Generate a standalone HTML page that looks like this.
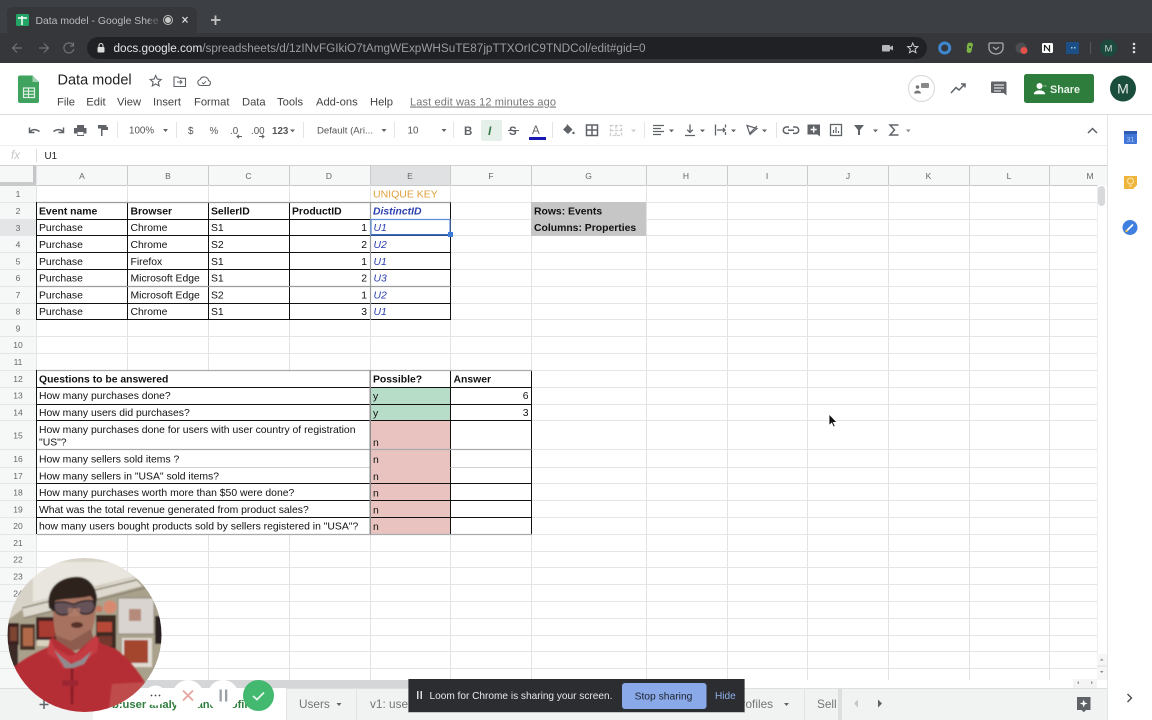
<!DOCTYPE html>
<html><head><meta charset="utf-8"><title>Data model</title>
<style>
html,body{margin:0;padding:0;background:#fff;width:1152px;height:720px;overflow:hidden}
svg{display:block;filter:blur(.25px)}
text{font-family:"Liberation Sans",Arial,sans-serif}
.c{font-size:10.4px;fill:#111}
.b{font-weight:bold}
.h{font-size:8.5px;fill:#666;text-anchor:middle}
.r{font-size:8.5px;fill:#666;text-anchor:middle}
.m{font-size:11.2px;fill:#444}
.t{font-size:9.8px;fill:#555}
.u{font-size:10.4px;fill:#2a3fb0;font-style:italic}
.ic{fill:#5f6368}
.st{fill:none;stroke:#5f6368;stroke-width:1.4}
.tab{font-size:11.8px;fill:#757575}
</style></head><body>
<svg width="1152" height="720" viewBox="0 0 1152 720" xmlns="http://www.w3.org/2000/svg">
<!-- chrome -->
<rect width="1152" height="34" fill="#3c3f43"/>
<rect y="33" width="1152" height="30" fill="#35373b"/>
<path d="M7 33V13a6 6 0 0 1 6-6H191a6 6 0 0 1 6 6V33z" fill="#35373b"/>
<rect x="16" y="14" width="13" height="12" rx="1.500" fill="#23a566"/>
<path d="M18 18h9M22 16v9" stroke="#fff" stroke-width="1.500"/>
<text x="35.500" y="24" font-size="10.400" fill="#b9bbbe">Data model - Google Shee</text>
<rect x="150" y="12" width="12" height="16" fill="#35373b" opacity=".6"/>
<circle cx="168" cy="20" r="4.500" fill="none" stroke="#bbb" stroke-width="1"/><circle cx="168" cy="20" r="3" fill="#c8c8c8"/>
<path d="M182.500 17l5 5.500m0-5.500l-5 5.500" stroke="#ddd" stroke-width="1.300"/>
<path d="M215.500 15.500v9.500M211 20h9.500" stroke="#c5c5c5" stroke-width="1.800"/>
<path d="M22 48H13m4-4.500L12.500 48l4.500 4.500" fill="none" stroke="#6f7276" stroke-width="1.200"/>
<path d="M39 48h9m-4-4.500l4.500 4.500-4.500 4.500" fill="none" stroke="#6f7276" stroke-width="1.200"/>
<path d="M73 45a5 5 0 1 0 .8 4M73.500 42.500v3.500H70" fill="none" stroke="#6f7276" stroke-width="1.200"/>
<rect x="87" y="37" width="840" height="22" rx="11" fill="#202124"/>
<rect x="97.500" y="47" width="7" height="5.500" rx="1" fill="#ddd"/><path d="M99 47v-1.500a2 2 0 0 1 4 0V47" fill="none" stroke="#ddd"/>
<text x="113.500" y="52" font-size="11.750" fill="#e4e5e6" textLength="532">docs.google.com<tspan fill="#9a9da1">/spreadsheets/d/1zINvFGIkiO7tAmgWExpWHSuTE87jpTTXOrIC9TNDCol/edit#gid=0</tspan></text>
<rect x="882" y="45" width="8" height="6.500" rx="1" fill="#b5b7ba"/><path d="M890 47l3-1.500v5l-3-1.500z" fill="#b5b7ba"/>
<path d="M912.700 43l1.500 3.400 3.700.3-2.800 2.400.9 3.600-3.300-1.900-3.200 1.900.9-3.600-2.800-2.400 3.700-.3z" fill="none" stroke="#ccc" stroke-width="1"/>
<circle cx="944.700" cy="48" r="5" fill="none" stroke="#3f87cf" stroke-width="3"/>
<path d="M968 43c3-1 5 0 5 2 0 1-1 2-1 3 0 3-1 5-3 5-2 0-3-2-2-4 0-1-1-2 1-6z" fill="#7cb342"/><circle cx="970" cy="47" r="1" fill="#35373b"/>
<path d="M990 43h12a1 1 0 0 1 1 1v4a7 6 0 0 1-14 0v-4a1 1 0 0 1 1-1z" fill="none" stroke="#aaa" stroke-width="1.300"/><path d="M993 47l3 2.500 3-2.500" fill="none" stroke="#aaa" stroke-width="1.200"/>
<circle cx="1021" cy="48" r="5.500" fill="#4b4d50"/><circle cx="1024" cy="50.500" r="3.500" fill="#e2514a"/>
<rect x="1042" y="43" width="11" height="10" rx="1.500" fill="#fff"/><path d="M1044.500 45v6m0-6l5 6v-6" stroke="#222" stroke-width="1.200" fill="none"/>
<rect x="1066" y="42" width="13" height="12" fill="#1d4f87"/><rect x="1071" y="47" width="1.500" height="1.500" fill="#9cd"/><rect x="1074" y="47" width="1.500" height="1.500" fill="#9cd"/>
<rect x="1090" y="42" width="1" height="12" fill="#55585c"/>
<circle cx="1108.500" cy="48" r="8.500" fill="#1c4a3c"/><text x="1108.500" y="51.500" font-size="9.500" fill="#c9d4d0" text-anchor="middle">M</text>
<circle cx="1134" cy="44" r="1.300" fill="#ddd"/><circle cx="1134" cy="48" r="1.300" fill="#ddd"/><circle cx="1134" cy="52" r="1.300" fill="#ddd"/>

<!-- docs header -->
<path d="M18 77.500a2 2 0 0 1 2-2h12.500l6.500 6.500v19a2 2 0 0 1-2 2H20a2 2 0 0 1-2-2z" fill="#3fa35f"/>
<path d="M32.500 75.500l6.500 6.500h-6.500z" fill="#9fd1af"/>
<path d="M23.500 88h11v9.500h-11zM23.500 91.200h11M23.500 94.300h11M28.500 88v9.500" fill="none" stroke="#dcefe2" stroke-width="1.200"/>
<text x="57.500" y="84.500" font-size="14.500" fill="#222">Data model</text>
<path d="M155.700 75.500l1.600 3.600 3.900.4-2.900 2.600.8 3.800-3.400-2-3.400 2 .8-3.800-2.900-2.600 3.900-.4z" fill="none" stroke="#5f6368" stroke-width="1.100"/>
<path d="M174 77h4l1.200 1.300h6.300v8.200H174z" fill="none" stroke="#5f6368" stroke-width="1.100"/><path d="M177 82h5m-2-2l2 2-2 2" fill="none" stroke="#5f6368"/>
<path d="M200.500 85.500a3 3 0 0 1-.4-5.900 4.500 4.500 0 0 1 8.500 1 2.500 2.500 0 0 1-.4 4.900z" fill="none" stroke="#5f6368" stroke-width="1.100"/><path d="M202 82.500l1.500 1.300 2.500-2.500" fill="none" stroke="#5f6368"/>
<text x="57" y="105.500" class="m">File</text>
<text x="86.300" y="105.500" class="m">Edit</text>
<text x="117" y="105.500" class="m">View</text>
<text x="153" y="105.500" class="m">Insert</text>
<text x="194" y="105.500" class="m">Format</text>
<text x="242" y="105.500" class="m">Data</text>
<text x="277" y="105.500" class="m">Tools</text>
<text x="316" y="105.500" class="m">Add-ons</text>
<text x="370" y="105.500" class="m">Help</text>
<text x="410" y="105.500" font-size="11" fill="#777" text-decoration="underline" textLength="146">Last edit was 12 minutes ago</text>

<circle cx="921.500" cy="88.500" r="13" fill="#fff" stroke="#dadce0" stroke-width="1.200"/>
<circle cx="917.500" cy="87" r="1.800" fill="#777"/><path d="M914 93.500a3.500 3 0 0 1 7 0z" fill="#777"/><rect x="921" y="83" width="8" height="5" rx="1" fill="#888"/>
<path d="M951 93l5-5.500 3 2.500 6-6M961 84h4v3.500" fill="none" stroke="#5f6368" stroke-width="1.500"/>
<path d="M992 81.500h13.500a1 1 0 0 1 1 1v13l-3-2.500H992a1 1 0 0 1-1-1v-9.500a1 1 0 0 1 1-1z" fill="#5f6368"/><path d="M994 85h10M994 88h10M994 91h7" stroke="#fff"/>
<rect x="1024" y="74" width="70" height="29" rx="2.500" fill="#2f7d3c"/>
<circle cx="1039.500" cy="86" r="3" fill="#fff"/><path d="M1034 94a5.500 3.500 0 0 1 11 0zM1043.500 86h3" fill="#fff" stroke="#fff" stroke-width=".5"/>
<text x="1050" y="93" font-size="10.800" font-weight="bold" fill="#e8f2ea">Share</text>
<circle cx="1123" cy="88.500" r="13" fill="#1a4d3c"/><text x="1123" y="93.500" font-size="14" fill="#e6eeea" text-anchor="middle">M</text>

<!-- toolbar -->
<rect y="114" width="1107" height="1" fill="#dadce0"/>
<rect x="1107" y="114" width="45" height="1" fill="#dadce0"/>
<path d="M30 132.500c1-3 5-4 9.500-1M29.500 127.500v5h5" fill="none" stroke="#5f6368" stroke-width="1.500"/>
<path d="M63 132.500c-1-3-5-4-9.500-1M63.500 127.500v5h-5" fill="none" stroke="#5f6368" stroke-width="1.500"/>
<path d="M74 128h3v-3h7v3h2.500v5.500h-2.500v2.500h-7v-2.500h-3z" fill="#5f6368"/><rect x="77.500" y="132" width="6" height="3" fill="#fff"/>
<path d="M98 125h8.500v3.500H98zM106.500 127h1.500v3h-5.500v6H101v-7.500" fill="#5f6368"/>
<rect x="117" y="122" width="1" height="16" fill="#e4e4e4"/>
<text x="129" y="133.500" class="t">100%</text><path d="M163 129h5l-2.500 3z" class="ic"/>
<rect x="176" y="122" width="1" height="16" fill="#e4e4e4"/>
<text x="188" y="134" class="t" font-size="10.500">$</text>
<text x="209.500" y="134" class="t" font-size="10">%</text>
<text x="230" y="134" class="t" font-size="10">.0</text><path d="M242 136.500h-5m2-1.800l-2 1.800 2 1.800" fill="none" stroke="#5f6368"/>
<text x="251" y="134" class="t" font-size="10">.00</text><path d="M259 136.500h5m-2-1.800l2 1.800-2 1.800" fill="none" stroke="#5f6368"/>
<text x="272" y="134" class="t" font-size="10" font-weight="bold">123</text><path d="M290 129.500h5l-2.500 2.800z" class="ic"/>
<rect x="303" y="122" width="1" height="16" fill="#e4e4e4"/>
<text x="317" y="133.500" font-size="9.600" fill="#555">Default (Ari...</text><path d="M381.500 129h5l-2.500 3z" class="ic"/>
<rect x="394" y="122" width="1" height="16" fill="#e4e4e4"/>
<text x="407.500" y="133.500" class="t">10</text><path d="M441.500 129h5l-2.500 3z" class="ic"/>
<rect x="453" y="122" width="1" height="16" fill="#e4e4e4"/>
<text x="464" y="135" font-size="11.500" font-weight="bold" fill="#5f6368">B</text>
<rect x="481" y="120" width="21" height="21" rx="2" fill="#e6f0ea"/>
<text x="488" y="135" font-size="12" font-weight="bold" font-style="italic" fill="#3b7d4a" font-family="Liberation Serif">I</text>
<text x="509" y="135" font-size="11.500" font-weight="bold" fill="#5f6368">S</text><rect x="508" y="130" width="11" height="1" fill="#5f6368"/>
<text x="532" y="134" font-size="11.500" fill="#5f6368">A</text><rect x="529" y="137" width="17" height="3" fill="#1919b4"/>
<rect x="552" y="122" width="1" height="16" fill="#e4e4e4"/>
<path d="M567 124l5.500 5.500-4.500 4.500-5-4.500 3.500-3.500z" fill="#5f6368"/><circle cx="573.500" cy="133" r="1.200" fill="#5f6368"/>
<path d="M586.500 125h11v10.500h-11zM592 125v10.500M586.500 130h11" fill="none" stroke="#5f6368" stroke-width="1.500"/>
<path d="M610.500 125.500h11v10h-11zM616 125.500v3M616 132.500v3M610.500 130.500h11" fill="none" stroke="#c9cbce" stroke-width="1.300" stroke-dasharray="3 1.500"/>
<path d="M631 129.500h5l-2.500 2.800z" fill="#c9cbce"/>
<rect x="644" y="122" width="1" height="16" fill="#e4e4e4"/>
<path d="M653 125.500h11M653 128.500h8M653 131.500h11M653 134.500h8" stroke="#5f6368" stroke-width="1.200"/>
<path d="M669 129.500h5l-2.500 2.800z" class="ic"/>
<path d="M690 124.500v8m-2.800-2.800l2.800 2.800 2.800-2.800M685 135.500h10" fill="none" stroke="#5f6368" stroke-width="1.300"/>
<path d="M700 129.500h5l-2.500 2.800z" class="ic"/>
<path d="M715.500 124.500v11M725.500 124.500v3M725.500 132v3M717 130h8m-2-2l2 2-2 2" fill="none" stroke="#5f6368" stroke-width="1.300"/>
<path d="M731 129.500h5l-2.500 2.800z" class="ic"/>
<path d="M747 125.500l10 3-7 6zM750 133l7-7" fill="none" stroke="#5f6368" stroke-width="1.200"/>
<path d="M762 129.500h5l-2.500 2.800z" class="ic"/>
<rect x="776" y="122" width="1" height="16" fill="#e4e4e4"/>
<path d="M789 127h-2.500a3.200 3.200 0 0 0 0 6.400h2.500M793 127h2.500a3.200 3.200 0 0 1 0 6.400H793M788 130.200h6" fill="none" stroke="#5f6368" stroke-width="1.500"/>
<path d="M807.500 124.500h12.500v12l-2.500-2h-10z" fill="#5f6368"/><path d="M813.700 126.500v6M810.700 129.500h6" stroke="#fff" stroke-width="1.500"/>
<rect x="830.500" y="124.500" width="11" height="11" fill="none" stroke="#5f6368" stroke-width="1.300"/><path d="M833.500 133v-3M836 133v-6M838.500 133v-2" stroke="#5f6368" stroke-width="1.200"/>
<path d="M854 125h10l-4 5v5h-2v-5z" fill="#5f6368"/><path d="M873 129.500h5l-2.500 2.800z" class="ic"/>
<path d="M898.500 125h-8.500l4.500 5-4.500 5h8.500" fill="none" stroke="#5f6368" stroke-width="1.500"/><path d="M906 129.500h4.500l-2.200 2.800z" fill="#888"/>
<path d="M1088 133l4.500-4.500 4.500 4.500" fill="none" stroke="#5f6368" stroke-width="1.500"/>

<!-- formula bar -->
<rect y="145" width="1107" height="1" fill="#eeeff0"/>
<text x="11" y="159" font-size="11.500" font-style="italic" fill="#c5c6c8" font-family="Liberation Serif">fx</text>
<rect x="36" y="149" width="1" height="13" fill="#dadce0"/>
<text x="44.500" y="159" font-size="9.800" fill="#222">U1</text>

<!-- grid -->
<rect y="165" width="1107" height="20" fill="#f6f7f7"/>
<rect y="185" width="36" height="503" fill="#f6f7f7"/>
<rect x="370" y="166" width="80" height="19" fill="#dfe1e3"/>
<rect y="219" width="36" height="17" fill="#e3e5e7"/>
<rect x="0" y="165" width="1107" height="1" fill="#cfd1d3"/>
<rect x="33" y="165" width="3.500" height="20" fill="#c4c6c8"/>
<rect x="0" y="182" width="36" height="3" fill="#c9cbcd"/>
<rect y="185" width="1097" height="1" fill="#c6c8ca"/>
<path stroke="#e4e5e6" stroke-width="1" fill="none" d="M0 202.500H1097M0 219.500H1097M0 235.500H1097M0 252.500H1097M0 269.500H1097M0 286.500H1097M0 303.500H1097M0 319.500H1097M0 336.500H1097M0 353.500H1097M0 370.500H1097M0 387.500H1097M0 404.500H1097M0 420.500H1097M0 449.500H1097M0 467.500H1097M0 483.500H1097M0 500.500H1097M0 517.500H1097M0 534.500H1097M0 551.500H1097M0 567.500H1097M0 584.500H1097M0 601.500H1097M0 618.500H1097M0 635.500H1097M0 651.500H1097M0 668.500H1097"/>
<path stroke="#e2e3e4" stroke-width="1" fill="none" d="M36.500 165V680M127.500 165V680M208.500 165V680M289.500 165V680M370.500 165V680M450.500 165V680M531.500 165V680M646.500 165V680M727.500 165V680M807.500 165V680M888.500 165V680M969.500 165V680M1049.500 165V680"/>
<path stroke="#c8cacc" stroke-width="1" fill="none" d="M127.500 165V185M208.500 165V185M289.500 165V185M370.500 165V185M450.500 165V185M531.500 165V185M646.500 165V185M727.500 165V185M807.500 165V185M888.500 165V185M969.500 165V185M1049.500 165V185"/>
<text x="82" y="179" class="h">A</text><text x="168" y="179" class="h">B</text><text x="248.500" y="179" class="h">C</text><text x="329" y="179" class="h">D</text><text x="410" y="179" class="h">E</text><text x="491" y="179" class="h">F</text><text x="588.500" y="179" class="h">G</text><text x="686" y="179" class="h">H</text><text x="767" y="179" class="h">I</text><text x="848" y="179" class="h">J</text><text x="928.500" y="179" class="h">K</text><text x="1009" y="179" class="h">L</text><text x="1090" y="179" class="h">M</text>
<g>
<text x="18" y="197" class="r">1</text><text x="18" y="214" class="r">2</text><text x="18" y="231" class="r">3</text><text x="18" y="247.500" class="r">4</text><text x="18" y="264.500" class="r">5</text><text x="18" y="281" class="r">6</text><text x="18" y="298" class="r">7</text><text x="18" y="314.500" class="r">8</text><text x="18" y="331.500" class="r">9</text><text x="18" y="348" class="r">10</text><text x="18" y="365" class="r">11</text><text x="18" y="382" class="r">12</text><text x="18" y="398.500" class="r">13</text><text x="18" y="415.500" class="r">14</text><text x="18" y="438.500" class="r">15</text><text x="18" y="462" class="r">16</text><text x="18" y="479" class="r">17</text><text x="18" y="495.500" class="r">18</text><text x="18" y="512.500" class="r">19</text><text x="18" y="529" class="r">20</text><text x="18" y="546" class="r">21</text><text x="18" y="562.500" class="r">22</text><text x="18" y="579.500" class="r">23</text><text x="18" y="596.500" class="r">24</text>
</g>
<rect x="531" y="202" width="115" height="34" fill="#c6c6c6"/>
<rect x="37" y="371" width="333" height="163" fill="#fff"/>
<rect x="451" y="371" width="80" height="163" fill="#fff"/>
<rect x="370" y="387" width="80" height="33.500" fill="#b7dcc7"/>
<rect x="370" y="420.500" width="80" height="113.500" fill="#e9c3bf"/>

<!-- table 1 -->
<path stroke="#111" stroke-width="1" fill="none" d="M37 219.500H450.500M37 235.500H450.500M37 252.500H450.500M37 269.500H450.500M37 303.500H450.500M37 319.500H450.500M36.500 202V320M127.500 202V320M208.500 202V320M289.500 202V320M450.500 202V320"/>
<path stroke="#9a9c9e" stroke-width="1.200" fill="none" d="M37 202.500H450.500M37 286.500H450.500M370.500 202V320"/>
<text x="373" y="197.500" font-size="10.500" fill="#e0a03c">UNIQUE KEY</text>
<g>
<text x="39" y="214.500" class="c b">Event name</text><text x="130.500" y="214.500" class="c b">Browser</text><text x="211" y="214.500" class="c b">SellerID</text><text x="292" y="214.500" class="c b">ProductID</text>
<text x="39" y="231" class="c">Purchase</text><text x="130.500" y="231" class="c">Chrome</text><text x="211" y="231" class="c">S1</text><text x="367" y="231" class="c" text-anchor="end">1</text>
<text x="39" y="248" class="c">Purchase</text><text x="130.500" y="248" class="c">Chrome</text><text x="211" y="248" class="c">S2</text><text x="367" y="248" class="c" text-anchor="end">2</text>
<text x="39" y="265" class="c">Purchase</text><text x="130.500" y="265" class="c">Firefox</text><text x="211" y="265" class="c">S1</text><text x="367" y="265" class="c" text-anchor="end">1</text>
<text x="39" y="281.500" class="c">Purchase</text><text x="130.500" y="281.500" class="c">Microsoft Edge</text><text x="211" y="281.500" class="c">S1</text><text x="367" y="281.500" class="c" text-anchor="end">2</text>
<text x="39" y="298.500" class="c">Purchase</text><text x="130.500" y="298.500" class="c">Microsoft Edge</text><text x="211" y="298.500" class="c">S2</text><text x="367" y="298.500" class="c" text-anchor="end">1</text>
<text x="39" y="315" class="c">Purchase</text><text x="130.500" y="315" class="c">Chrome</text><text x="211" y="315" class="c">S1</text><text x="367" y="315" class="c" text-anchor="end">3</text>
</g>
<text x="373" y="214.500" class="u b">DistinctID</text>
<text x="373.500" y="231" class="u">U1</text><text x="373.500" y="248" class="u">U2</text><text x="373.500" y="265" class="u">U1</text><text x="373.500" y="281.500" class="u">U3</text><text x="373.500" y="298.500" class="u">U2</text><text x="373.500" y="315" class="u">U1</text>
<rect x="371" y="219.500" width="79" height="15.500" fill="none" stroke="#5b8ad6" stroke-width="1.200"/>
<rect x="371" y="234" width="78" height="1.600" fill="#3f6cc0"/>
<rect x="448" y="232" width="5" height="5" fill="#3f7ad8"/>
<text x="534" y="214.500" class="c b">Rows: Events</text>
<text x="534" y="231" class="c b">Columns: Properties</text>

<!-- table 2 -->
<path stroke="#111" stroke-width="1" fill="none" d="M37 387.500H531.500M37 404.500H531.500M37 420.500H531.500M37 483.500H531.500M37 500.500H531.500M37 517.500H531.500M36.500 370V534M450.500 370V534M531.500 370V534"/>
<path stroke="#cfcfcf" stroke-width="1" fill="none" d="M37 467.500H370M450.500 467.500H531"/>
<path stroke="#a9abad" stroke-width="1.300" fill="none" d="M37 370.500H532M37 449.500H531.500M37 534.500H532"/>
<rect x="369.500" y="370" width="1.500" height="164" fill="#8a8a8a"/>
<text x="39" y="382.500" class="c b">Questions to be answered</text><text x="373" y="382.500" class="c b">Possible?</text><text x="453.500" y="382.500" class="c b">Answer</text>
<text x="39" y="399" class="c">How many purchases done?</text><text x="373" y="399.500" class="c">y</text><text x="528.500" y="399" class="c" text-anchor="end">6</text>
<text x="39" y="416" class="c">How many users did purchases?</text><text x="373" y="416.500" class="c">y</text><text x="528.500" y="416" class="c" text-anchor="end">3</text>
<text x="39" y="433" class="c">How many purchases done for users with user country of registration</text>
<text x="39" y="445.500" class="c">"US"?</text><text x="373" y="446" class="c">n</text>
<text x="39" y="462.500" class="c">How many sellers sold items ?</text><text x="373" y="463" class="c">n</text>
<text x="39" y="479.500" class="c">How many sellers in "USA" sold items?</text><text x="373" y="480" class="c">n</text>
<text x="39" y="496" class="c">How many purchases worth more than $50 were done?</text><text x="373" y="496.500" class="c">n</text>
<text x="39" y="513" class="c">What was the total revenue generated from product sales?</text><text x="373" y="513.500" class="c">n</text>
<text x="39" y="529.500" class="c">how many users bought products sold by sellers registered in "USA"?</text><text x="373" y="530" class="c">n</text>

<!-- scrollbars -->
<rect x="1097" y="185" width="10" height="495" fill="#fff"/>
<rect x="1097" y="185" width="1" height="495" fill="#eceded"/>
<rect x="1098" y="186" width="7" height="20" rx="3.500" fill="#d8d9da"/>
<rect x="1097" y="654" width="10" height="26" fill="#f6f6f6"/><path d="M1100 660.500h3.500l-1.750-2zM1100 671h3.500l-1.750 2z" fill="#888"/><rect x="1097" y="665.500" width="10" height="1" fill="#ddd"/>
<rect x="36" y="680" width="1071" height="8" fill="#fff"/>
<rect x="1073" y="679" width="24" height="9" fill="#f4f4f4"/><path d="M1079 683.500v-2.500l-2 1.700 2 1.700zM1091 681v3.400l2-1.700z" fill="#999"/>
<rect x="93" y="680" width="330" height="8" fill="#d5d6d7"/>
<!-- tab bar -->
<rect y="688" width="1107" height="32" fill="#f1f3f3"/>
<rect y="688" width="1107" height="1" fill="#dcdedf"/>
<rect x="93" y="688" width="193" height="32" fill="#fff"/>
<path d="M39.500 704.500h9M44 700v9" stroke="#5f6368" stroke-width="1.500"/>
<text x="112" y="708" font-size="11.200" font-weight="bold" fill="#2f7d3c">b:user analysis and profiles</text>
<rect x="286" y="688" width="1" height="32" fill="#e2e3e4"/>
<text x="299" y="708" class="tab">Users</text><path d="M336.500 703h5l-2.500 3z" class="ic"/>
<rect x="356" y="688" width="1" height="32" fill="#e2e3e4"/>
<text x="370" y="708" class="tab">v1: users</text>
<text x="735" y="708" class="tab">profiles</text><path d="M784 703h5l-2.500 3z" class="ic"/>
<rect x="804" y="688" width="1" height="32" fill="#e2e3e4"/>
<text x="817" y="708" class="tab">Sell</text>
<rect x="838" y="688" width="4" height="32" fill="#dcdedf"/>
<path d="M858 699.500v8l-4-4z" fill="#c5c7c9"/><path d="M878 699.500v8l4-4z" fill="#5f6368"/>
<path d="M1077 697h13.500v13h-4.500l-2.200 2.200-2.300-2.200h-4.500z" fill="#5f6368"/><path d="M1083.700 699.500l1 3 3 1-3 1-1 3-1-3-3-1 3-1z" fill="#fff"/>
<rect x="1107" y="115" width="1" height="605" fill="#e3e4e5"/>
<!-- side -->
<rect x="1124" y="132" width="13" height="12" rx="1" fill="#4175d6"/><rect x="1124" y="131" width="13" height="3" fill="#2d5cb4"/><text x="1130.500" y="142" font-size="7" fill="#a8c4f0" text-anchor="middle">31</text>
<path d="M1124 176h13v9l-4 4h-9z" fill="#eeb53c"/><circle cx="1130.500" cy="181" r="3" fill="none" stroke="#fbe6b4" stroke-width="1"/><path d="M1129 186h3" stroke="#fbe6b4"/>
<circle cx="1130" cy="227.500" r="7.500" fill="#3f7fe0"/><path d="M1127 230.500l6-6" stroke="#fff" stroke-width="1.800"/><circle cx="1126.500" cy="231" r="1.200" fill="#f4c344"/>
<path d="M1127.500 694l4 4-4 4" fill="none" stroke="#444" stroke-width="1.300"/>

<!-- mouse -->
<path d="M829 414v11.500l2.700-2.500 1.800 4 1.700-.8-1.800-3.800h3.600z" fill="#111" stroke="#fff" stroke-width=".8"/>

<!-- webcam -->
<defs><clipPath id="cam"><circle cx="84.500" cy="635" r="77"/></clipPath>
<filter id="soft" x="-5%" y="-5%" width="110%" height="110%"><feGaussianBlur stdDeviation=".7"/></filter></defs>
<g clip-path="url(#cam)"><g filter="url(#soft)">
<rect x="0" y="550" width="170" height="170" fill="#a9a18c"/>
<path d="M0 550h170v22l-70 14-76 22-16 12z" fill="#d8d3c8"/>
<path d="M33 562h88l14 14-58 14-44 12z" fill="#e9e6df"/>
<path d="M22 606L134 578l8 8L24 618z" fill="#ded9cf"/>
<path d="M22 608L136 580M24 618L145 588" stroke="#8b8270" stroke-width="1.500"/>
<rect x="7" y="623" width="12" height="22" fill="#3b2420"/><rect x="10" y="627" width="7" height="14" fill="#7d4532"/>
<rect x="20" y="624" width="15" height="26" fill="#4a3028"/><rect x="23" y="628" width="10" height="18" fill="#b06a48"/>
<rect x="36" y="617" width="21" height="24" fill="#402420"/><rect x="39" y="621" width="16" height="16" fill="#a83a30"/>
<rect x="8" y="645" width="10" height="22" fill="#3b2a25"/>
<rect x="37" y="640" width="16" height="6" fill="#d9d2bf"/>
<rect x="118" y="598" width="36" height="36" fill="#d9d4cf" stroke="#8e8578"/>
<rect x="129" y="609" width="12" height="12" fill="#b58a7a"/>
<rect x="122" y="638" width="30" height="29" fill="#e0dcd4"/><rect x="124" y="640" width="24" height="23" fill="#a4452e"/>
<rect x="96" y="615" width="20" height="36" fill="#3c2a24"/><rect x="97" y="622" width="15" height="10" fill="#b84a38"/><rect x="99" y="636" width="13" height="10" fill="#73392e"/>
<circle cx="110" cy="607" r="6.500" fill="#d88a70"/><circle cx="99" cy="609" r="3.500" fill="#c87a60"/>
<rect x="155" y="616" width="8" height="28" fill="#2a2420"/>
<!-- head -->
<path d="M53 596c6-8 34-10 42 0 2 12 0 26-3 35-3 7-8 14-18 15-10 0-17-4-19-14-2-12-3-26-2-36z" fill="#a77361"/>
<path d="M55 635c2 8 6 14 18 16l22-6-4-16-20 12z" fill="#8e5c50"/>
<path d="M49 608c-3-16 6-29 24-31 14-2 22 7 24 20l-1 10c-2-6-3-9-6-11-10 3-26 2-35 5-1 3-1 7-1 11z" fill="#2f211d"/>
<path d="M54 603c6-2 14-1 18 1l3 0c5-3 13-4 18-3l2 5c-1 5-4 8-9 8-5 0-8-2-10-6h-3c-1 4-5 7-10 7-5 0-8-3-9-7z" fill="#66535a" stroke="#272025" stroke-width="1.500"/>
<ellipse cx="77" cy="625" rx="6" ry="3" fill="#54302a"/>
<rect x="68" y="608" width="12" height="8" fill="#b07d6a" opacity=".8"/>
<!-- shirt -->
<path d="M10 672c6-10 26-20 38-25l4-10 24 16 20-18 4 8 16 6c12 8 24 24 32 38v30H15z" fill="#b52d36"/>
<path d="M50 638l-3 16 10 5 6 10 8-7 12 0 14-10 2-14-4-2-16 17-10 3-14-8z" fill="#c43a42"/>
<path d="M54 650l9 8 8 6 10-4 11-9-8 13-11 4-8 0z" fill="#8f8c90"/>
<path d="M72 668v36" stroke="#8a1f28" stroke-width="3"/>
<path d="M15 695l30 8 30 15H20z" fill="#932030"/>
<path d="M112 684l34-2-18 28-20 6z" fill="#c04c4c"/>
<path d="M62 680l16 0 0 6H62z" fill="#9c2530"/>
</g></g>

<!-- loom controls -->
<circle cx="155.500" cy="695.500" r="10" fill="#fff"/>
<circle cx="151.500" cy="695.500" r=".9" fill="#444"/><circle cx="155.500" cy="695.500" r=".9" fill="#444"/><circle cx="159.500" cy="695.500" r=".9" fill="#444"/>
<circle cx="188" cy="695.500" r="15.500" fill="#fff"/>
<path d="M183 690.500l10 10m0-10l-10 10" stroke="#e6a3a0" stroke-width="1.800"/>
<circle cx="223" cy="695.500" r="15.500" fill="#fff"/>
<rect x="219.500" y="689.500" width="2.300" height="12" fill="#9aa0a6"/><rect x="225" y="689.500" width="2.300" height="12" fill="#9aa0a6"/>
<circle cx="258.500" cy="695.500" r="15.500" fill="#43b86f"/>
<path d="M253 696l4 3.500 7-7" fill="none" stroke="#e8f6ed" stroke-width="1.800"/>

<!-- loom banner -->
<rect x="408" y="679" width="337" height="34" fill="#000" opacity=".18"/>
<rect x="408.500" y="679" width="336" height="33" fill="#2c2d30"/>
<rect x="417" y="691" width="1.500" height="8" fill="#dcdcdc"/><rect x="420.500" y="691" width="1.500" height="8" fill="#dcdcdc"/>
<text x="429.500" y="699" font-size="10.100" fill="#e8e8e8">Loom for Chrome is sharing your screen.</text>
<rect x="622" y="683" width="84.500" height="26" rx="3" fill="#89a9e8"/>
<text x="663.500" y="699.500" font-size="10.300" fill="#1c2330" text-anchor="middle">Stop sharing</text>
<text x="715" y="699" font-size="10.100" fill="#8fb0ea">Hide</text>
</svg>
</body></html>
